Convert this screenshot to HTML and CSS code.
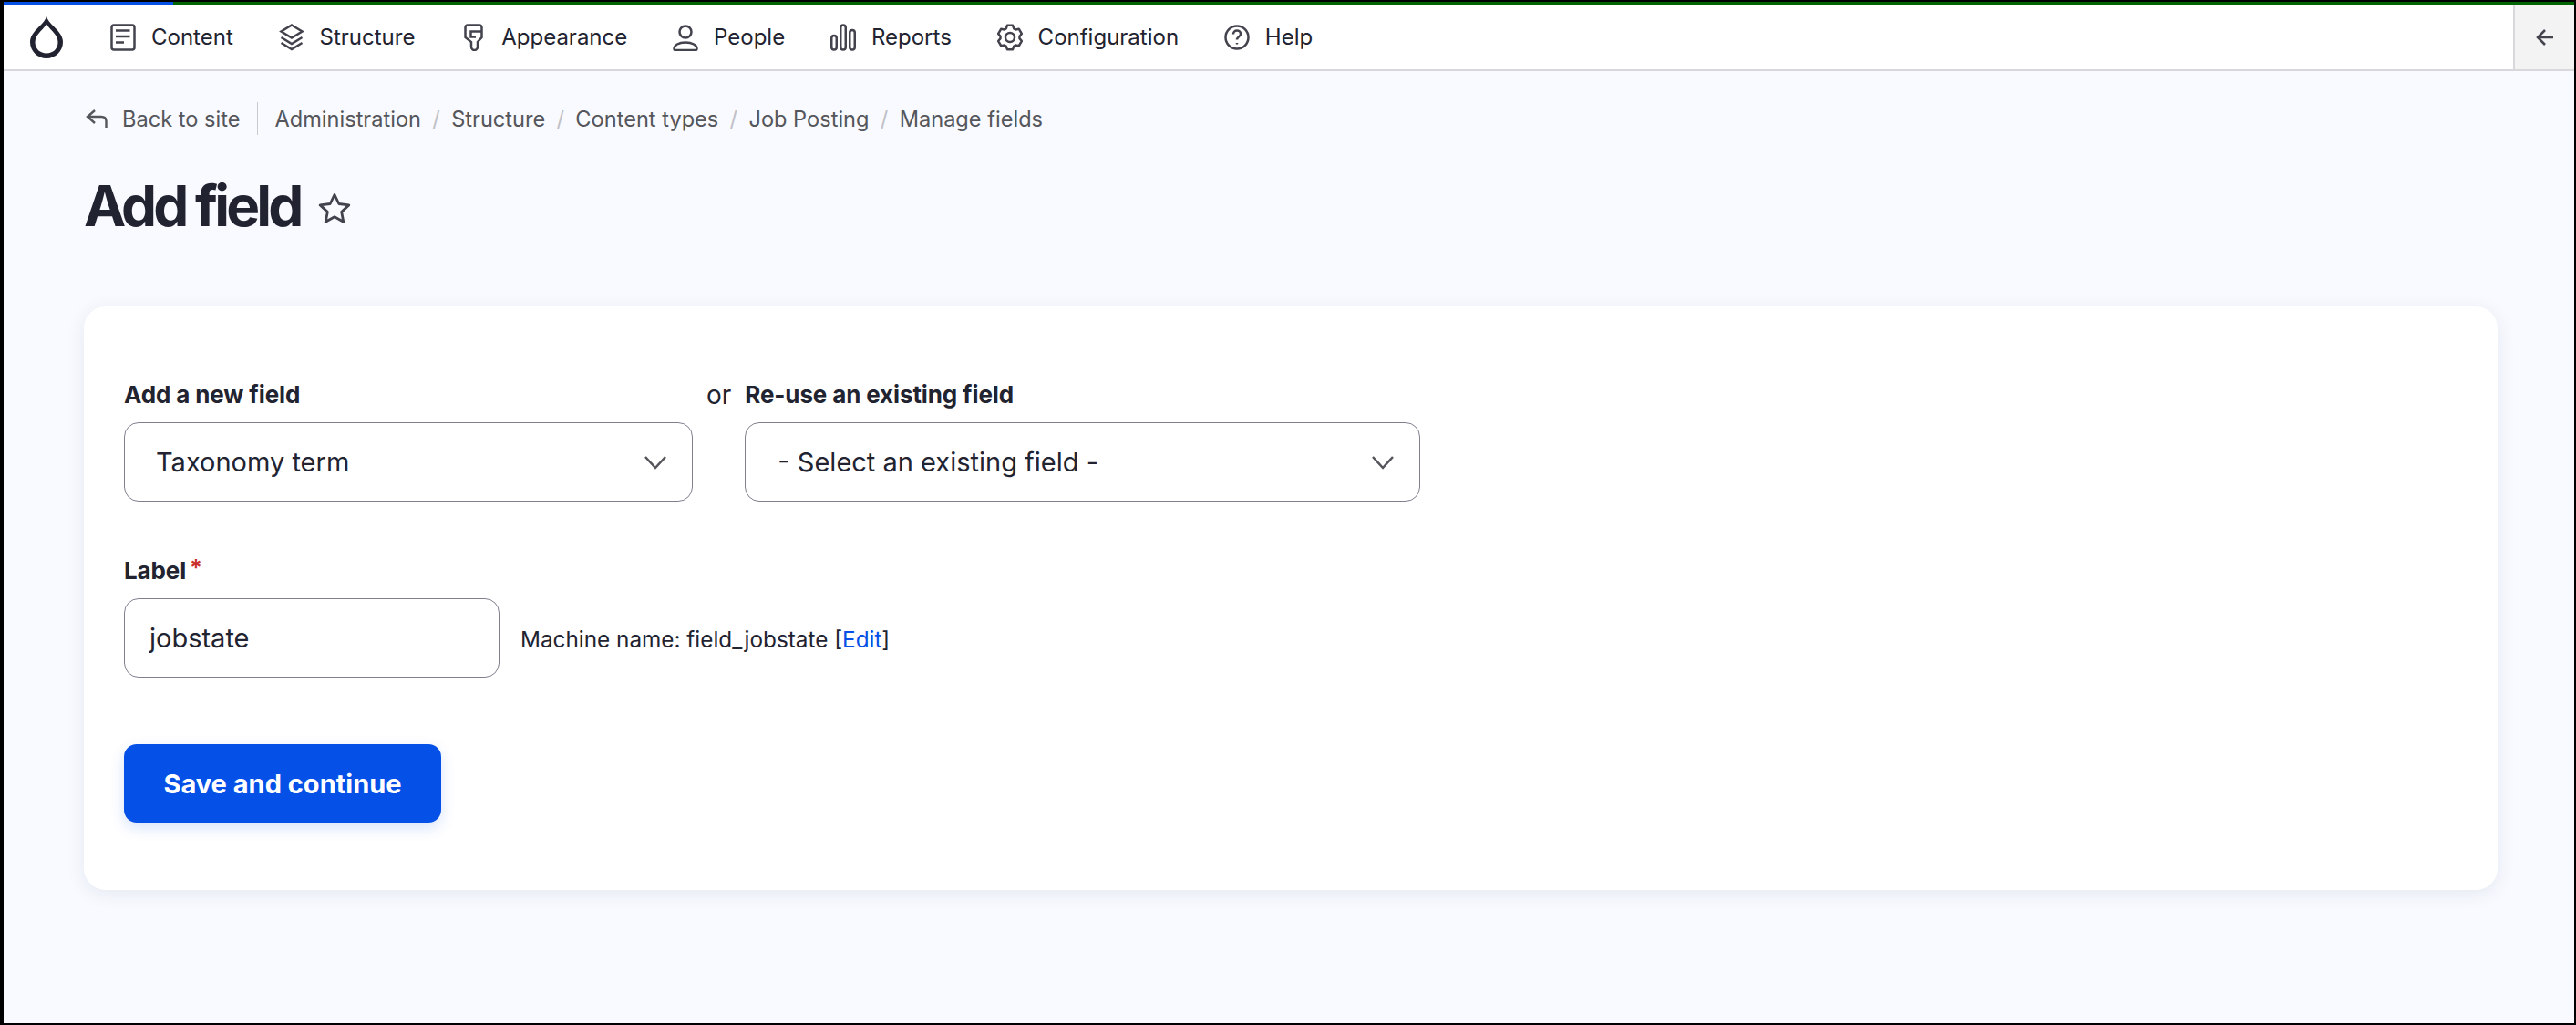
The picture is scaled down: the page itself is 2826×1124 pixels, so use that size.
FILE: index.html
```html
<!DOCTYPE html>
<html lang="en">
<head>
    <meta charset="UTF-8">
    <meta name="viewport" content="width=device-width, initial-scale=1.0">
    <title>Add field</title>
    <link rel="stylesheet" href="styles.css">
</head>
<body>

    <div class="progress"><div class="progress-done"></div></div>

    <header class="toolbar">
        <a class="logo" href="#">
            <svg width="36" height="46" viewBox="0 0 36 46"><path fill="#222330" fill-rule="evenodd" d="M18 0C19 4 22 7 26 11C32 17 36 22 36 28C36 38 28 46 18 46C8 46 0 38 0 28C0 22 4 17 10 11C14 7 17 4 18 0ZM18 8.500C15 13 12 15.500 10 18C7 21 5.500 25 5.500 28.500C5.500 35.500 11 40.500 18 40.500C25 40.500 30.500 35.500 30.500 28.500C30.500 25 29 21 26 18C24 15.500 21 13 18 8.500Z"/></svg>
        </a>
        <nav class="menu">
            <a class="menu-item" href="#">
                <svg class="icon" viewBox="0 0 28 30"><rect x="1.500" y="1.500" width="25" height="27" rx="2.500"/><path d="M6 7.500h15.500M6 14h15.500M6 20.500h9"/></svg>
                Content
            </a>
            <a class="menu-item" href="#">
                <svg class="icon" viewBox="0 0 28 30"><path d="M14 1.500L25.500 8.500 14 15.500 2.500 8.500Z"/><path d="M2.500 15L14 22 25.500 15"/><path d="M2.500 21L14 28 25.500 21"/></svg>
                Structure
            </a>
            <a class="menu-item" href="#">
                <svg class="icon" viewBox="0 0 28 30"><path d="M5.500 15V4A2.500 2.500 0 0 1 8 1.500H21A2.500 2.500 0 0 1 23.500 4V15L19 20V25.500a3.500 3.500 0 0 1-7 0V20Z"/><path d="M23.500 8.500H11.500V14.500H17"/></svg>
                Appearance
            </a>
            <a class="menu-item" href="#">
                <svg class="icon" viewBox="0 0 28 30"><circle cx="14" cy="9" r="6.500"/><path d="M1.500 27.500c0-4 5-7 12.500-7s12.500 3 12.500 7c0 1-.5 1.500-1.500 1.500H3c-1 0-1.500-.5-1.500-1.500Z"/></svg>
                People
            </a>
            <a class="menu-item" href="#">
                <svg class="icon" viewBox="0 0 28 30"><rect x="1.250" y="13" width="5.500" height="15.500" rx="2.750"/><rect x="11.250" y="1.500" width="5.500" height="27" rx="2.750"/><rect x="21.250" y="7" width="5.500" height="21.500" rx="2.750"/></svg>
                Reports
            </a>
            <a class="menu-item" href="#">
                <svg class="icon" viewBox="0 0 28 30"><circle cx="14" cy="15" r="5"/><path stroke-linejoin="round" d="M9.730 5.410L10.960 1.850H17.040L18.270 5.410A10.500 10.500 0 0 1 20.170 6.510L23.870 5.790L26.910 11.050L24.440 13.900A10.500 10.500 0 0 1 24.440 16.100L26.910 18.950L23.870 24.210L20.170 23.490A10.500 10.500 0 0 1 18.270 24.590L17.040 28.150H10.960L9.730 24.590A10.500 10.500 0 0 1 7.830 23.490L4.130 24.210L1.090 18.950L3.560 16.100A10.500 10.500 0 0 1 3.560 13.900L1.090 11.050L4.130 5.790L7.830 6.510A10.500 10.500 0 0 1 9.730 5.410Z"/></svg>
                Configuration
            </a>
            <a class="menu-item" href="#">
                <svg class="icon" viewBox="0 0 28 30"><circle cx="14" cy="15" r="12.500"/><path d="M10 11.500c0-2.500 1.800-4 4-4s4 1.500 4 3.700c0 3-4 3.300-4 6.300"/><path d="M14 21v1.500"/></svg>
                Help
            </a>
        </nav>
        <button class="collapse" type="button">
            <svg width="20" height="20" viewBox="0 0 20 20"><path d="M19 10H2M10 2l-8 8 8 8" fill="none" stroke="#42434d" stroke-width="2.500"/></svg>
        </button>
    </header>

    <main class="content">
        <div class="crumbs">
            <a class="back" href="#">
                <svg width="24" height="20" viewBox="0 0 24 20"><path d="M10 1L2 8l8 7M2 8h15c3.500 0 5.500 2 5.500 5v7" fill="none" stroke="#55565b" stroke-width="2.400"/></svg>
                Back to site
            </a>
            <ol class="crumb-list">
                <li><a href="#">Administration</a></li>
                <li><a href="#">Structure</a></li>
                <li><a href="#">Content types</a></li>
                <li><a href="#">Job Posting</a></li>
                <li><a href="#">Manage fields</a></li>
            </ol>
        </div>

        <div class="title-row">
            <h1>Add field</h1>
            <svg class="star" width="36" height="34" viewBox="0 0 36 34"><path d="M18 2.500l4.800 10 11 1.400-8.100 7.500 2.100 10.800-9.800-5.400-9.800 5.400 2.100-10.800-8.100-7.500 11-1.400Z" fill="none" stroke="#42434d" stroke-width="2.800" stroke-linejoin="round"/></svg>
        </div>

        <form class="card">
            <div class="field-row">
                <div class="field">
                    <label for="newField">Add a new field</label>
                    <select id="newField" class="select select-new">
                        <option>Taxonomy term</option>
                    </select>
                </div>
                <span class="or">or</span>
                <div class="field">
                    <label for="oldField">Re-use an existing field</label>
                    <select id="oldField" class="select select-old">
                        <option>- Select an existing field -</option>
                    </select>
                </div>
            </div>

            <div class="field field-label">
                <label for="fieldLabel">Label<span class="required">*</span></label>
                <div class="label-row">
                    <input id="fieldLabel" class="text-input" type="text" value="jobstate">
                    <span class="machine">Machine name: field_jobstate [<a href="#">Edit</a>]</span>
                </div>
            </div>

            <button class="save" type="button">Save and continue</button>
        </form>
    </main>

</body>
</html>
```

FILE: styles.css
```css
html {
    background: #000;
}
body {
    margin: 2px 2px 2px 4px;
    height: 1120px;
    overflow: hidden;
    background: #f8faff;
    font-family: Inter, "Liberation Sans", sans-serif;
    color: #222330;
}
a {
    color: inherit;
    text-decoration: none;
}
.progress {
    height: 3px;
    background: #006400;
}
.progress-done {
    width: 186px;
    height: 3px;
    background: #0550e6;
}
.toolbar {
    display: flex;
    align-items: center;
    height: 71px;
    background: #fff;
    border-bottom: 2px solid #d8d8dc;
}
.logo {
    display: flex;
    width: 117px;
    padding-left: 29px;
    box-sizing: border-box;
}
.menu {
    display: flex;
    flex: 1;
    gap: 49.800px;
}
.menu-item {
    display: flex;
    align-items: center;
    gap: 17px;
    font-size: 24px;
}
.icon {
    width: 28px;
    height: 30px;
    fill: none;
    stroke: #42434d;
    stroke-width: 2.500;
}
.collapse {
    display: flex;
    align-items: center;
    justify-content: center;
    width: 67px;
    height: 71px;
    padding: 0;
    background: #f3f3f3;
    border: none;
    border-left: 2px solid #d8d8dc;
}
.content {
    padding: 34px 84px 0 88px;
}
.crumbs {
    display: flex;
    align-items: center;
    height: 36px;
    font-size: 23.600px;
    color: #55565b;
}
.back {
    display: flex;
    align-items: center;
    gap: 16px;
    height: 36px;
    padding: 0 19px 0 2px;
    border-right: 1px solid #c9c9ce;
}
.crumb-list {
    display: flex;
    margin: 0;
    padding: 0 0 0 18px;
    list-style: none;
}
.crumb-list li + li::before {
    content: "/";
    margin: 0 12.300px;
    color: #c0c0c6;
}
.title-row {
    display: flex;
    align-items: center;
    gap: 20px;
    margin-top: 40px;
}
h1 {
    margin: 0;
    font-size: 62px;
    line-height: 76px;
    font-weight: 700;
    letter-spacing: -0.063em;
}
.star {
    margin-top: 4px;
}
.card {
    margin-top: 72px;
    padding: 82px 44px 72px;
    height: 640px;
    box-sizing: border-box;
    background: #fff;
    border-radius: 24px;
    box-shadow: 0 4px 20px rgba(50, 60, 110, 0.09);
}
.field-row {
    display: flex;
    align-items: flex-start;
}
.field label {
    display: block;
    height: 30px;
    margin-bottom: 15px;
    font-size: 26px;
    line-height: 30px;
    font-weight: 700;
    letter-spacing: -0.005em;
}
.or {
    margin: 0 15px 0 15px;
    font-size: 28px;
    line-height: 30px;
}
.select {
    display: block;
    height: 87px;
    padding: 0 35px;
    font: inherit;
    font-size: 29px;
    color: #222330;
    border: 1px solid #7f828e;
    border-radius: 16px;
    appearance: none;
    background: #fff url("data:image/svg+xml,%3Csvg xmlns='http://www.w3.org/2000/svg' width='24' height='16' viewBox='0 0 24 16'%3E%3Cpath d='M1 2l11 12L23 2' fill='none' stroke='%2355565b' stroke-width='2.500'/%3E%3C/svg%3E") no-repeat right 28px center;
}
.select-new {
    width: 624px;
    padding-left: 34px;
}
.select-old {
    width: 741px;
}
.field-label {
    margin-top: 61px;
}
.required {
    color: #c9302c;
    font-size: 25px;
    margin-left: 4px;
    vertical-align: 3px;
    line-height: 0;
}
.label-row {
    display: flex;
    align-items: center;
    gap: 23px;
}
.text-input {
    width: 412px;
    height: 87px;
    padding: 0 27px;
    box-sizing: border-box;
    font: inherit;
    font-size: 29px;
    color: #222330;
    background: #fff;
    border: 1px solid #7f828e;
    border-radius: 16px;
}
.machine {
    font-size: 24.300px;
    margin-top: 3px;
}
.machine a {
    color: #0550e6;
}
.save {
    display: block;
    width: 348px;
    height: 86px;
    margin-top: 73px;
    padding: 0;
    font: inherit;
    font-size: 29px;
    font-weight: 700;
    color: #fff;
    background: #0550e6;
    border: none;
    border-radius: 14px;
    box-shadow: 0 6px 16px rgba(5, 80, 230, 0.16);
}
```
